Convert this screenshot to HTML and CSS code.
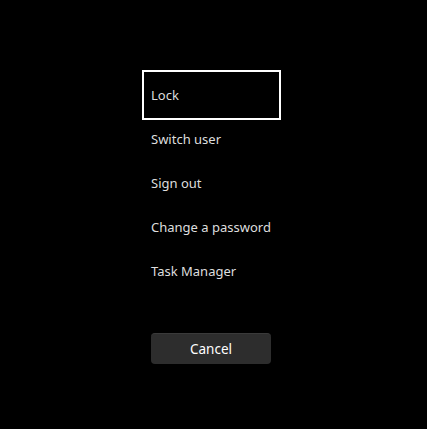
FILE: index.html
```html
<!DOCTYPE html>
<html>
<head>
<meta charset="utf-8">
<link rel="stylesheet" href="styles.css">
</head>
<body>
<div class="screen">
  <ul class="menu">
    <li class="item focused">Lock</li>
    <li class="item">Switch user</li>
    <li class="item">Sign out</li>
    <li class="item">Change a password</li>
    <li class="item">Task Manager</li>
  </ul>
  <button class="cancel">Cancel</button>
</div>
</body>
</html>
```
FILE: styles.css
```css
html, body {
  margin: 0;
  padding: 0;
  background: #000;
  width: 427px;
  height: 429px;
  overflow: hidden;
}
.screen {
  display: flex;
  flex-direction: column;
  align-items: flex-start;
  padding: 73px 0 0 145px;
  font-family: "Noto Sans", "Open Sans", sans-serif;
}
.menu {
  list-style: none;
  margin: 0;
  padding: 0;
  width: 133px;
}
.item {
  height: 44px;
  box-sizing: border-box;
  display: flex;
  align-items: center;
  padding: 0 0 1px 6px;
  color: #dedede;
  font-size: 13px;
  white-space: nowrap;
}
.focused {
  outline: 2px solid #fff;
  outline-offset: 1px;
}
.cancel {
  margin: 40px 0 0 6px;
  width: 120px;
  height: 31px;
  border: none;
  border-top: 1px solid #3a3a3a;
  border-radius: 4px;
  background: #2d2d2d;
  color: #fff;
  font-family: "Noto Sans", "Open Sans", sans-serif;
  font-size: 13.5px;
  padding: 0 0 1px 0;
}
```
